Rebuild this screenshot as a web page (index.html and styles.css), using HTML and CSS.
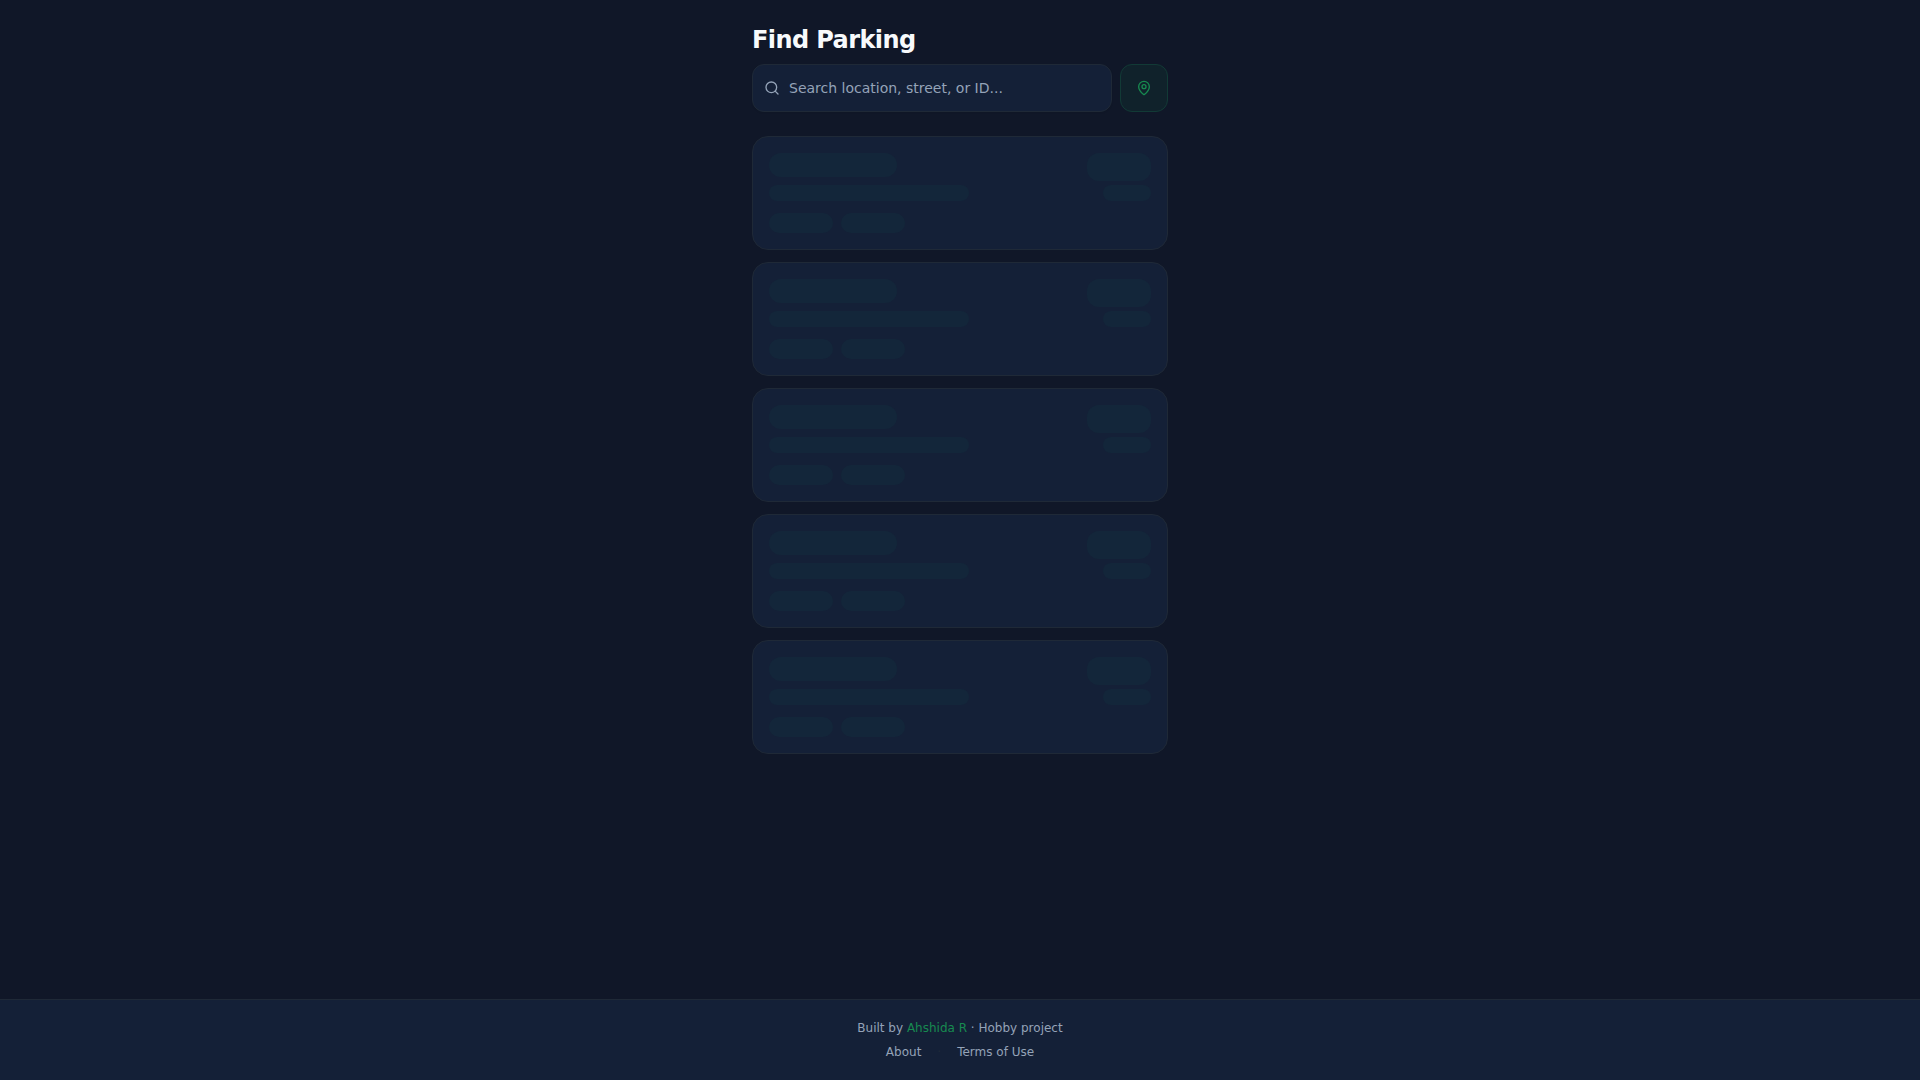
FILE: index.html
```html
<!DOCTYPE html>
<html lang="en">
<head>
<meta charset="utf-8">
<meta name="viewport" content="width=device-width, initial-scale=1">
<title>Find Parking</title>
<link rel="stylesheet" href="styles.css">
</head>
<body>
<main class="page">
  <header class="header">
    <h1 class="title">Find Parking</h1>
    <form class="search-row">
      <label class="search">
        <svg class="icon" viewBox="0 0 24 24" aria-hidden="true"><circle cx="11" cy="11" r="8"/><path d="m21 21-4.3-4.3"/></svg>
        <input class="search-input" type="text" aria-label="Search parking" placeholder="Search location, street, or ID...">
      </label>
      <button class="locate" type="button" aria-label="Use my location">
        <svg class="icon" viewBox="0 0 24 24" aria-hidden="true"><path d="M20 10c0 4.993-5.539 10.193-7.399 11.799a1 1 0 0 1-1.202 0C9.539 20.193 4 14.993 4 10a8 8 0 0 1 16 0"/><circle cx="12" cy="10" r="3"/></svg>
      </button>
    </form>
  </header>
  <section class="cards" aria-busy="true" aria-label="Loading parking spots">
    <div class="card">
      <div class="details"><div class="bone name"></div><div class="bone address"></div><div class="tags"><div class="bone tag"></div><div class="bone tag"></div></div></div>
      <div class="status"><div class="bone badge"></div><div class="bone distance"></div></div>
    </div>
    <div class="card">
      <div class="details"><div class="bone name"></div><div class="bone address"></div><div class="tags"><div class="bone tag"></div><div class="bone tag"></div></div></div>
      <div class="status"><div class="bone badge"></div><div class="bone distance"></div></div>
    </div>
    <div class="card">
      <div class="details"><div class="bone name"></div><div class="bone address"></div><div class="tags"><div class="bone tag"></div><div class="bone tag"></div></div></div>
      <div class="status"><div class="bone badge"></div><div class="bone distance"></div></div>
    </div>
    <div class="card">
      <div class="details"><div class="bone name"></div><div class="bone address"></div><div class="tags"><div class="bone tag"></div><div class="bone tag"></div></div></div>
      <div class="status"><div class="bone badge"></div><div class="bone distance"></div></div>
    </div>
    <div class="card">
      <div class="details"><div class="bone name"></div><div class="bone address"></div><div class="tags"><div class="bone tag"></div><div class="bone tag"></div></div></div>
      <div class="status"><div class="bone badge"></div><div class="bone distance"></div></div>
    </div>
  </section>
</main>
<footer class="footer">
  <p class="credit">Built by <a class="author" href="#">Ahshida R</a> · Hobby project</p>
  <nav class="links"><a href="#">About</a><span class="dot" aria-hidden="true">·</span><a href="#">Terms of Use</a></nav>
</footer>
</body>
</html>
```
FILE: styles.css
```css
:root {
  --bg: #101728;
  --surface: #142037;
  --border: #1f2937;
  --muted: #94a3b8;
  --green: #178a50;
}

* {
  box-sizing: border-box;
  margin: 0;
}

body {
  min-height: 100vh;
  display: flex;
  flex-direction: column;
  background: var(--bg);
  color: #f8fafc;
  font: 14px/20px "DejaVu Sans", sans-serif;
}

a {
  color: inherit;
  text-decoration: none;
}

.page {
  flex: 1;
  width: 100%;
  max-width: 448px;
  margin: 0 auto;
  padding: 24px 16px;
}

.header {
  display: grid;
  gap: 8px;
  margin-bottom: 24px;
}

.title {
  font-size: 24px;
  line-height: 32px;
  font-weight: 700;
  letter-spacing: -0.025em;
}

.search-row {
  display: flex;
  gap: 8px;
}

.search {
  flex: 1;
  min-width: 0;
  height: 48px;
  display: flex;
  align-items: center;
  gap: 9px;
  padding: 0 11px;
  background: var(--surface);
  border: 1px solid var(--border);
  border-radius: 12px;
  color: var(--muted);
  box-shadow: 0 1px 2px rgb(0 0 0 / 5%);
}

.icon {
  flex: none;
  width: 16px;
  height: 16px;
  fill: none;
  stroke: currentColor;
  stroke-width: 2;
  stroke-linecap: round;
  stroke-linejoin: round;
}

.search-input {
  flex: 1;
  min-width: 0;
  padding: 0;
  border: 0;
  outline: 0;
  background: none;
  color: #f8fafc;
  font: inherit;
}

.search-input::placeholder {
  color: var(--muted);
  opacity: 1;
}

.locate {
  width: 48px;
  height: 48px;
  display: grid;
  place-items: center;
  padding: 0;
  border: 1px solid #123a36;
  border-radius: 12px;
  background: #10222b;
  color: var(--green);
}

.cards {
  display: grid;
  gap: 12px;
}

.card {
  display: flex;
  justify-content: space-between;
  padding: 16px;
  background: var(--surface);
  border: 1px solid var(--border);
  border-radius: 16px;
}

.details {
  display: grid;
  gap: 8px;
}

.status {
  display: flex;
  flex-direction: column;
  align-items: flex-end;
  gap: 4px;
}

.tags {
  display: flex;
  gap: 8px;
  margin-top: 4px;
}

.bone {
  height: 16px;
  border-radius: 12px;
  background: #13263a;
}

.name {
  width: 128px;
  height: 24px;
}

.address {
  width: 200px;
}

.tag {
  width: 64px;
  height: 20px;
}

.badge {
  width: 64px;
  height: 28px;
}

.distance {
  width: 48px;
}

.footer {
  display: grid;
  justify-items: center;
  gap: 8px;
  padding: 20px 16px;
  background: var(--surface);
  border-top: 1px solid var(--border);
  color: var(--muted);
  font-size: 12px;
  line-height: 16px;
}

.author {
  color: var(--green);
}

.links {
  display: flex;
  gap: 16px;
}

.dot {
  color: var(--border);
}
```
